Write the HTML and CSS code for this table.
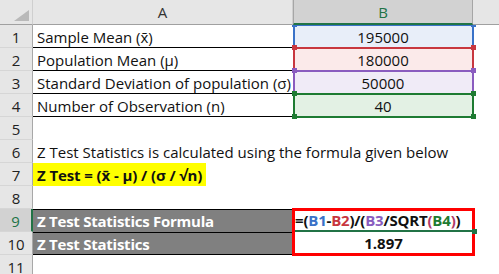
FILE: index.html
```html
<!DOCTYPE html>
<html>
<head>
<meta charset="utf-8">
<link rel="stylesheet" href="styles.css">
</head>
<body>
<div class="sheet">
  <div class="corner"><svg width="16" height="12" viewBox="0 0 16 12"><polygon points="15,0 15,11 0,11" fill="#b9b9b9"/></svg></div>
  <div class="colhead">A</div>
  <div class="colhead sel">B</div>
  <div class="colhead last"></div>

  <div class="rowhead">1</div>
  <div class="cell lined">Sample Mean (x̄)</div>
  <div class="cell ref blue">195000</div>
  <div class="cell"></div>

  <div class="rowhead">2</div>
  <div class="cell lined">Population Mean (µ)</div>
  <div class="cell ref red">180000</div>
  <div class="cell"></div>

  <div class="rowhead">3</div>
  <div class="cell lined">Standard Deviation of population (σ)</div>
  <div class="cell ref purple">50000</div>
  <div class="cell"></div>

  <div class="rowhead">4</div>
  <div class="cell lined">Number of Observation (n)</div>
  <div class="cell ref green">40</div>
  <div class="cell"></div>

  <div class="rowhead">5</div>
  <div class="cell"></div>
  <div class="cell"></div>
  <div class="cell"></div>

  <div class="rowhead">6</div>
  <div class="cell">Z Test Statistics is calculated using the formula given below</div>
  <div class="cell"></div>
  <div class="cell"></div>

  <div class="rowhead">7</div>
  <div class="cell hl"><span class="mark">Z Test = (x̄ - µ) / (σ / √n)</span></div>
  <div class="cell"></div>
  <div class="cell"></div>

  <div class="rowhead">8</div>
  <div class="cell"></div>
  <div class="cell"></div>
  <div class="cell"></div>

  <div class="result">
    <div class="formula">=(<span class="c-blue">B1</span>-<span class="c-red">B2</span>)/(<span class="c-purple">B3</span>/SQRT<span class="c-par">(</span><span class="c-green">B4</span><span class="c-par">)</span>)</div>
    <div class="value">1.897</div>
  </div>

  <div class="rowhead sel">9</div>
  <div class="cell dark">Z Test Statistics Formula</div>
  <div class="cell"></div>

  <div class="rowhead">10</div>
  <div class="cell dark last">Z Test Statistics</div>
  <div class="cell"></div>

  <div class="rowhead">11</div>
  <div class="cell"></div>
  <div class="cell"></div>
  <div class="cell"></div>
</div>
</body>
</html>
```

FILE: styles.css
```css
* { box-sizing: border-box; }

html, body {
  margin: 0;
  padding: 0;
  background: #ffffff;
}

body {
  width: 499px;
  height: 274px;
  overflow: hidden;
}

.sheet {
  display: grid;
  grid-template-columns: 33px 260px 180px 26px;
  grid-template-rows: 25px repeat(11, 23px);
  font-family: "Open Sans", "Noto Sans", sans-serif;
  font-size: 15px;
  color: #111;
}

.corner {
  background: #e6e6e6;
  border-right: 1px solid #cfcfcf;
  border-bottom: 1px solid #a0a0a0;
  display: flex;
  align-items: flex-end;
  justify-content: flex-end;
  padding: 0 2px 2px 0;
  position: relative;
  z-index: 2;
}

.corner svg { display: block; }

.colhead {
  background: #e6e6e6;
  border-bottom: 1px solid #a0a0a0;
  border-right: 1px solid #cfcfcf;
  display: flex;
  align-items: center;
  justify-content: center;
  color: #333;
  font-size: 15px;
  position: relative;
  z-index: 2;
}

.colhead.sel {
  background: #d2d2d2;
  color: #217346;
  border-bottom: 2px solid #217346;
  border-left: 1px solid #a6a6a6;
  border-right: 1px solid #a6a6a6;
}

.colhead.last { border-right: none; }

.rowhead {
  background: #e6e6e6;
  border-right: 1px solid #a8a8a8;
  border-bottom: 1px solid #d6d6d6;
  display: flex;
  align-items: flex-end;
  justify-content: center;
  padding-bottom: 0;
  color: #222;
  font-size: 15px;
  line-height: 20px;
}

.rowhead.sel {
  background: #d2d2d2;
  color: #217346;
  border-right: 2px solid #217346;
}

.cell {
  display: flex;
  align-items: flex-end;
  padding: 0 4px 1px;
  white-space: nowrap;
  line-height: 20px;
  min-width: 0;
}

.cell.lined { border-bottom: 1px solid #000; padding-bottom: 0; }

.cell.hl { padding-left: 0; align-items: stretch; padding-bottom: 0; }

.mark {
  background: #ffff00;
  font-weight: bold;
  padding: 1px 4px 1px 4px;
  letter-spacing: -0.1px;
  display: flex;
  align-items: flex-end;
}

.ref {
  position: relative;
  justify-content: center;
  background: var(--bg);
}

.ref::before {
  content: "";
  position: absolute;
  left: 0;
  right: -1px;
  top: -1px;
  bottom: -1px;
  border: 2px solid var(--c);
  z-index: 1;
}

.ref::after {
  content: "";
  position: absolute;
  left: -1px;
  top: -3px;
  width: 5px;
  height: 5px;
  background: var(--c);
  box-shadow: 179px 0 0 var(--c), 0 23px 0 var(--c), 179px 23px 0 var(--c);
  z-index: 1;
}

.blue   { --c: #3a72c8; --bg: #e8eef9; }
.red    { --c: #c8373f; --bg: #fbeaea; }
.purple { --c: #8a5cbf; --bg: #f0ebf7; }
.green  { --c: #1e7b32; --bg: #e3f1e4; }

.dark {
  background: #808080;
  color: #ffffff;
  font-weight: bold;
  letter-spacing: -0.25px;
  border-top: 1px solid #000;
}

.dark.last { border-bottom: 1px solid #000; padding-bottom: 0; }

.result {
  grid-column: 3;
  grid-row: 10 / span 2;
  margin: -1px -2px -1px -1px;
  border: 3px solid #ff0000;
  display: grid;
  grid-template-rows: 21px 21px;
  position: relative;
  z-index: 3;
  font-weight: bold;
  line-height: 20px;
  white-space: nowrap;
}

.formula {
  border-bottom: 2px solid #217346;
  display: flex;
  align-items: flex-end;
  position: relative;
  letter-spacing: -0.2px;
}

.formula::after {
  content: "";
  position: absolute;
  right: -5px;
  bottom: -4px;
  width: 5px;
  height: 5px;
  background: #217346;
}

.value {
  display: flex;
  align-items: flex-end;
  justify-content: center;
}

.c-blue { color: #3a72c8; }
.c-red { color: #c8373f; }
.c-purple { color: #8a5cbf; }
.c-green { color: #1e7b32; }
.c-par { color: #b03a6a; }
```
